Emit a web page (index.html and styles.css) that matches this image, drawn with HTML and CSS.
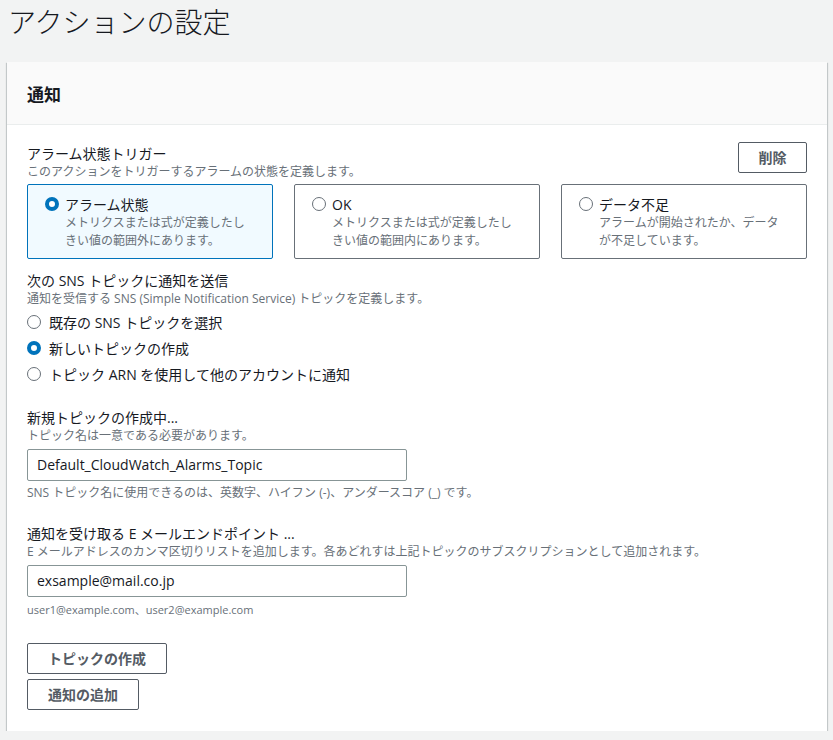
FILE: index.html
```html
<!DOCTYPE html>
<html lang="ja">
<head>
<meta charset="utf-8">
<title>アクションの設定</title>
<link rel="stylesheet" href="styles.css">
</head>
<body>
<h1 class="page-title">アクションの設定</h1>
<div class="card">
  <div class="card-header"><h2 class="card-title">通知</h2></div>
  <div class="card-body">
    <div class="trigger-head">
      <div>
        <div class="label">アラーム状態トリガー</div>
        <div class="desc">このアクションをトリガーするアラームの状態を定義します。</div>
      </div>
      <button class="btn btn-del">削除</button>
    </div>
    <div class="tiles">
      <div class="tile tile-selected">
        <div class="tile-row"><span class="radio radio-on"></span><span class="tile-title">アラーム状態</span></div>
        <div class="tile-desc">メトリクスまたは式が定義したしきい値の範囲外にあります。</div>
      </div>
      <div class="tile">
        <div class="tile-row"><span class="radio"></span><span class="tile-title">OK</span></div>
        <div class="tile-desc">メトリクスまたは式が定義したしきい値の範囲内にあります。</div>
      </div>
      <div class="tile">
        <div class="tile-row"><span class="radio"></span><span class="tile-title">データ不足</span></div>
        <div class="tile-desc">アラームが開始されたか、データが不足しています。</div>
      </div>
    </div>

    <div class="section sns">
      <div class="label">次の SNS トピックに通知を送信</div>
      <div class="desc">通知を受信する SNS (Simple Notification Service) トピックを定義します。</div>
      <div class="radio-list">
        <div class="radio-item"><span class="radio"></span><span>既存の SNS トピックを選択</span></div>
        <div class="radio-item"><span class="radio radio-on"></span><span>新しいトピックの作成</span></div>
        <div class="radio-item"><span class="radio"></span><span>トピック ARN を使用して他のアカウントに通知</span></div>
      </div>
    </div>

    <div class="section topic">
      <div class="label">新規トピックの作成中...</div>
      <div class="desc">トピック名は一意である必要があります。</div>
      <div class="input">Default_CloudWatch_Alarms_Topic</div>
      <div class="hint">SNS トピック名に使用できるのは、英数字、ハイフン (-)、アンダースコア (_) です。</div>
    </div>

    <div class="section email">
      <div class="label">通知を受け取る E メールエンドポイント ...</div>
      <div class="desc">E メールアドレスのカンマ区切りリストを追加します。各あどれすは上記トピックのサブスクリプションとして追加されます。</div>
      <div class="input">exsample@mail.co.jp</div>
      <div class="hint hint-small">user1@example.com、user2@example.com</div>
    </div>

    <div class="actions">
      <button class="btn">トピックの作成</button>
      <button class="btn">通知の追加</button>
    </div>
  </div>
</div>
</body>
</html>
```
FILE: styles.css
```css
* { box-sizing: border-box; }
html, body {
  margin: 0;
  padding: 0;
  background: #f2f3f3;
}
body {
  font-family: "Open Sans", "Noto Sans CJK JP", sans-serif;
  color: #16191f;
  font-size: 14px;
}
.page-title {
  margin: 0;
  padding: 0 8px;
  height: 62px;
  line-height: 42px;
  font-size: 28px;
  font-weight: 300;
  color: #16191f;
  font-family: "Noto Sans CJK JP", sans-serif;
}
.card {
  margin: 0 6px 0 7px;
  background: #fff;
  box-shadow: 0 1px 1px 0 rgba(0,28,36,.3), 1px 1px 1px 0 rgba(0,28,36,.15), -1px 1px 1px 0 rgba(0,28,36,.15);
}
.card-header {
  height: 63px;
  background: #fafafa;
  border-bottom: 1px solid #eaeded;
  display: flex;
  align-items: center;
  padding: 0 20px;
}
.card-title {
  margin: 0;
  font-size: 17px;
  font-weight: 700;
  font-family: "Noto Sans CJK JP", sans-serif;
}
.card-body {
  padding: 17px 20px 21px 20px;
}
.trigger-head {
  display: flex;
  justify-content: space-between;
  align-items: flex-start;
}
.label {
  font-size: 14px;
  line-height: 20px;
  margin-top: 2px;
}
.desc {
  font-size: 12px;
  line-height: 16px;
  color: #687078;
}
.btn {
  font-family: "Noto Sans CJK JP", sans-serif;
  font-size: 14px;
  font-weight: 700;
  color: #545b64;
  background: #fff;
  border: 1px solid #545b64;
  border-radius: 2px;
  height: 31px;
  padding: 0 20px;
  line-height: 29px;
  display: block;
}
.btn-del { width: 69px; padding: 0; }
.tiles {
  display: grid;
  grid-template-columns: repeat(3, 1fr);
  gap: 21px;
  margin-top: 4px;
}
.tile {
  height: 75px;
  border: 1px solid #687078;
  border-radius: 2px;
  padding: 9px 17px 0 17px;
}
.tile-selected {
  border-color: #0073bb;
  background: #f1faff;
}
.tile-row {
  display: flex;
  align-items: center;
  height: 20px;
}
.tile-title { font-size: 14px; }
.tile-desc {
  font-size: 12px;
  line-height: 18px;
  color: #687078;
  padding-left: 20px;
}
.radio {
  width: 14px;
  height: 14px;
  border-radius: 50%;
  border: 1.5px solid #687078;
  background: #fff;
  flex: none;
  margin-right: 6px;
}
.radio-on {
  border: 4px solid #0073bb;
}
.section.sns { margin-top: 12px; }
.radio-list { margin-top: 2px; }
.radio-item {
  display: flex;
  align-items: center;
  height: 26px;
  font-size: 14px;
}
.radio-item .radio { margin-right: 8px; }
.section.topic { margin-top: 21px; }
.section.email { margin-top: 23px; }
.input {
  margin-top: 5px;
  width: 380px;
  height: 32px;
  border: 1px solid #879596;
  border-radius: 2px;
  padding: 0 9px;
  line-height: 30px;
  font-size: 14px;
  color: #16191f;
  background: #fff;
}
.hint {
  margin-top: 4px;
  font-size: 12px;
  line-height: 16px;
  color: #687078;
}
.hint-small { font-size: 11px; margin-top: 5px; }
.actions {
  margin-top: 25px;
  display: flex;
  flex-direction: column;
  align-items: flex-start;
  gap: 5px;
}
```
